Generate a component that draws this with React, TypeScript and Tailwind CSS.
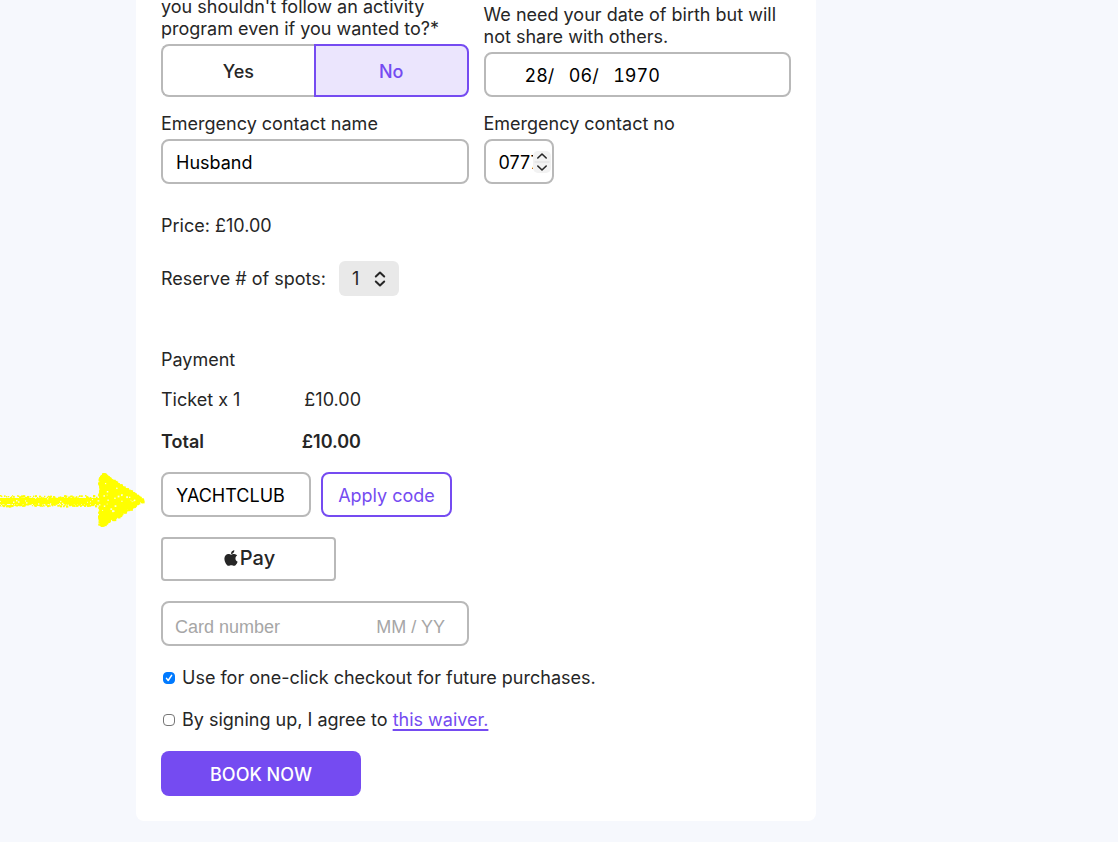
import { useState } from 'react';
import type { ReactNode } from 'react';
import { FaApple } from 'react-icons/fa';

const inputClass =
  'h-[45px] w-full rounded-lg border-2 border-[#b9b9b9] bg-white px-[13px] pt-0.5 text-black outline-none';

interface FieldProps {
  id: string;
  label: string;
  children: ReactNode;
}

function Field({ id, label, children }: FieldProps) {
  return (
    <div className="flex flex-col justify-end gap-1">
      <label htmlFor={id}>{label}</label>
      {children}
    </div>
  );
}

interface CheckProps {
  id: string;
  defaultChecked?: boolean;
  children: ReactNode;
}

function Check({ id, defaultChecked, children }: CheckProps) {
  return (
    <div className="flex items-center gap-[7px] pl-0.5">
      <span className="relative flex">
        <input
          id={id}
          type="checkbox"
          defaultChecked={defaultChecked}
          className="peer size-3 appearance-none rounded-[4px] border border-[#767676] bg-white checked:border-[#007aff] checked:bg-[#007aff]"
        />
        <svg
          viewBox="0 0 12 12"
          className="pointer-events-none absolute inset-0 hidden size-3 peer-checked:block"
          fill="none"
          stroke="#fff"
          strokeWidth="1.5"
          strokeLinecap="round"
          strokeLinejoin="round"
        >
          <path d="M3.5 6.4 5.2 8.5 8.6 3.4" />
        </svg>
      </span>
      <label htmlFor={id}>{children}</label>
    </div>
  );
}

// Small repeatable generator so the crayon texture is stable between renders
function makeRandom(seed: number) {
  let s = seed;
  return () => {
    s = (s * 16807) % 2147483647;
    return s / 2147483647;
  };
}

function crayonSpecks() {
  const rand = makeRandom(71);
  const edge: { x: number; y: number; s: number }[] = [];
  const holes: { x: number; y: number; s: number }[] = [];

  for (let x = 0; x < 100; x += 1) {
    edge.push({ x, y: 24 + rand() * 4, s: 1 + rand() * 1.5 });
    edge.push({ x, y: 32 + rand() * 2.5, s: 1 + rand() * 1.5 });
    if (rand() > 0.7) holes.push({ x, y: 25 + rand() * 9, s: 0.7 + rand() * 0.8 });
  }
  for (let i = 0; i < 110; i += 1) {
    const t = rand();
    edge.push({ x: 102 + t * 40, y: 1 + t * 26 + rand() * 3, s: 1 + rand() * 2 });
    edge.push({ x: 101 + t * 41, y: 55 - t * 25 - rand() * 3, s: 1 + rand() * 2 });
    edge.push({ x: 98 + rand() * 3, y: 6 + t * 48, s: 1 + rand() * 1.5 });
  }
  for (let i = 0; i < 26; i += 1) {
    const t = rand();
    holes.push({
      x: 101 + t * 34,
      y: 29 + (rand() - 0.5) * 46 * (1 - t),
      s: 0.7 + rand() * 1.2,
    });
  }
  return { edge, holes };
}

const specks = crayonSpecks();

function CrayonArrow() {
  return (
    <svg
      width="146"
      height="60"
      viewBox="0 0 146 60"
      className="pointer-events-none absolute top-[471px] left-0"
      aria-hidden="true"
    >
      <path d="M0 27H99L100 5 104 2 142 29 104 54 100 54 99 33H0Z" fill="#ff0" />
      {specks.edge.map((p, i) => (
        <rect key={i} x={p.x} y={p.y} width={p.s} height={p.s} fill="#ff0" />
      ))}
      {specks.holes.map((p, i) => (
        <rect key={i} x={p.x} y={p.y} width={p.s} height={p.s} fill="#fafbe0" />
      ))}
    </svg>
  );
}

export default function App() {
  const [answer, setAnswer] = useState<'yes' | 'no'>('no');

  return (
    <div className="relative min-h-screen overflow-hidden bg-[#f6f8fd] pb-5 pl-[136px] font-['Inter','Liberation_Sans',sans-serif] text-lg leading-[22px] text-[#262626]">
      <form
        className="-mt-1 w-full max-w-[680px] rounded-b-lg bg-white px-[25px] pb-[25px]"
        onSubmit={(e) => e.preventDefault()}
      >
        <div className="grid grid-cols-2 gap-x-[15px] gap-y-4">
          <div className="flex flex-col gap-1" role="group" aria-labelledby="activity-label">
            <span id="activity-label">
              you shouldn't follow an activity
              <br />
              program even if you wanted to?*
            </span>
            <div className="flex h-[53px] font-medium">
              <button
                type="button"
                aria-pressed={answer === 'yes'}
                onClick={() => setAnswer('yes')}
                className={`flex-1 rounded-l-lg border-2 pt-0.5 ${
                  answer === 'yes'
                    ? 'border-[#754bf1] bg-[#ebe5fd] text-[#754bf1]'
                    : 'border-r-0 border-[#b9b9b9] bg-white'
                }`}
              >
                Yes
              </button>
              <button
                type="button"
                aria-pressed={answer === 'no'}
                onClick={() => setAnswer('no')}
                className={`flex-1 rounded-r-lg border-2 pt-0.5 ${
                  answer === 'no'
                    ? 'border-[#754bf1] bg-[#ebe5fd] text-[#754bf1]'
                    : 'border-l-0 border-[#b9b9b9] bg-white'
                }`}
              >
                No
              </button>
            </div>
          </div>

          <Field id="dob" label="We need your date of birth but will not share with others.">
            <input
              id="dob"
              type="text"
              defaultValue="28/   06/   1970"
              className="h-[45px] w-full rounded-lg border-2 border-[#b9b9b9] bg-white pt-0.5 pr-3 pl-[39px] text-black tabular-nums outline-none"
            />
          </Field>

          <Field id="contact-name" label="Emergency contact name">
            <input id="contact-name" type="text" defaultValue="Husband" className={inputClass} />
          </Field>

          <Field id="contact-no" label="Emergency contact no">
            <div className="flex h-[45px] w-[70px] items-center rounded-lg border-2 border-[#b9b9b9] bg-white pr-px pl-[13px]">
              <input
                id="contact-no"
                type="text"
                inputMode="numeric"
                defaultValue="07777"
                className="min-w-0 flex-1 pt-0.5 text-black outline-none"
              />
              <svg
                viewBox="0 0 18 22"
                className="h-[22px] w-[18px] shrink-0"
                fill="none"
                stroke="#262626"
                strokeWidth="1.6"
                strokeLinecap="round"
                strokeLinejoin="round"
              >
                <rect width="18" height="22" rx="5" fill="#f2f2f2" stroke="none" />
                <path d="M2 11H16" stroke="#dcdcdc" strokeWidth="1" />
                <path d="M4.8 7 9 3 13.2 7M4.8 15 9 19 13.2 15" />
              </svg>
            </div>
          </Field>
        </div>

        <p className="mt-[31px]">Price: £10.00</p>

        <div className="mt-6 flex items-center gap-[13px]">
          <label htmlFor="spots">Reserve # of spots:</label>
          <div className="relative">
            <select
              id="spots"
              className="h-[35px] w-[60px] appearance-none rounded-md bg-[#e9e9e9] pl-[13px] outline-none"
            >
              <option>1</option>
              <option>2</option>
              <option>3</option>
            </select>
            <svg
              viewBox="0 0 12 16"
              className="pointer-events-none absolute top-[10px] right-[13px] h-4 w-3"
              fill="none"
              stroke="#262626"
              strokeWidth="2"
              strokeLinecap="round"
              strokeLinejoin="round"
            >
              <path d="M1.8 5.5 6 1.5 10.2 5.5M1.8 10.5 6 14.5 10.2 10.5" />
            </svg>
          </div>
        </div>

        <h2 className="mt-[53px]">Payment</h2>
        <table className="mt-[18px] w-[200px]">
          <tbody>
            <tr>
              <td className="pb-5">Ticket x 1</td>
              <td className="pb-5 text-right">£10.00</td>
            </tr>
            <tr className="font-semibold">
              <td>Total</td>
              <td className="text-right">£10.00</td>
            </tr>
          </tbody>
        </table>

        <div className="mt-[19px] flex flex-col items-start gap-5">
          <div className="flex gap-[10px]">
            <div className="w-[150px]">
              <input
                type="text"
                aria-label="Promo code"
                defaultValue="YACHTCLUB"
                className={inputClass}
              />
            </div>
            <button
              type="button"
              className="h-[45px] w-[131px] rounded-lg border-2 border-[#754bf1] bg-white pt-0.5 text-[#754bf1]"
            >
              Apply code
            </button>
          </div>

          <button
            type="button"
            aria-label="Apple Pay"
            className="flex h-11 w-[175px] items-center justify-center rounded border-2 border-[#b9b9b9] bg-white pb-0.5 text-xl leading-[22px] font-medium"
          >
            <FaApple className="size-[18px]" />
            Pay
          </button>

          <div className="flex h-[45px] w-[308px] items-center justify-between rounded-lg border-2 border-[#b9b9b9] pt-1.5 pr-[22px] pl-3 font-['Liberation_Sans',sans-serif]">
            <input
              type="text"
              aria-label="Card number"
              placeholder="Card number"
              className="w-[150px] outline-none placeholder:text-[#a6a6a6]"
            />
            <input
              type="text"
              aria-label="Expiry date"
              placeholder="MM / YY"
              className="w-20 text-right outline-none placeholder:text-[#a6a6a6]"
            />
          </div>
        </div>

        <div className="mt-[21px] flex flex-col items-start gap-5">
          <Check id="one-click" defaultChecked>
            Use for one-click checkout for future purchases.
          </Check>
          <Check id="waiver">
            By signing up, I agree to{' '}
            <a href="#waiver" className="text-[#754bf1] underline decoration-2 underline-offset-3">
              this waiver.
            </a>
          </Check>

          <button
            type="submit"
            className="h-[45px] w-[200px] rounded-lg bg-[#754bf1] pt-0.5 font-medium text-white"
          >
            BOOK NOW
          </button>
        </div>
      </form>

      <CrayonArrow />
    </div>
  );
}
